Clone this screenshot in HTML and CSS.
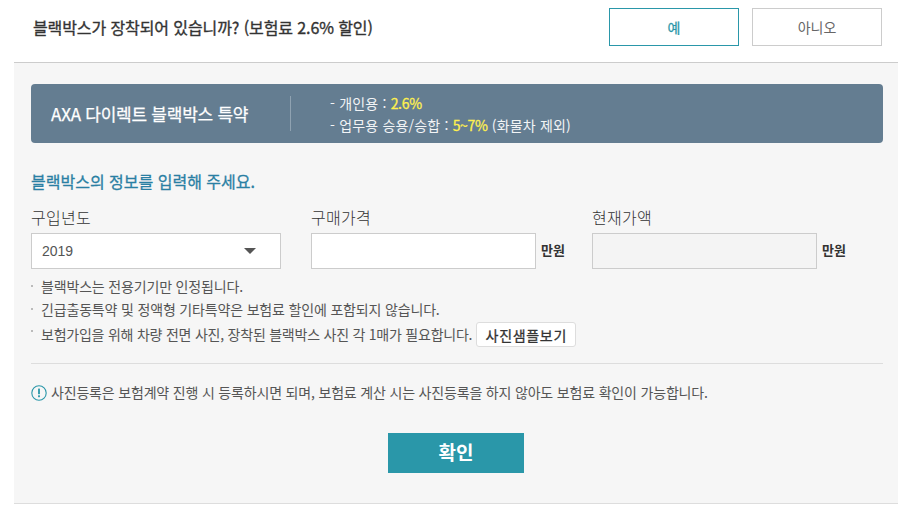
FILE: index.html
```html
<!DOCTYPE html>
<html lang="ko">
<head>
<meta charset="utf-8">
<title>블랙박스 특약</title>
<link rel="stylesheet" href="styles.css">
</head>
<body>
<div class="wrap">
  <header class="head">
    <h1 class="q">블랙박스가 장착되어 있습니까? (보험료 2.6% 할인)</h1>
    <div class="choices">
      <button class="choice on">예</button>
      <button class="choice">아니오</button>
    </div>
  </header>
  <main class="panel">
    <section class="banner">
      <div class="b-title">AXA 다이렉트 블랙박스 특약</div>
      <div class="b-list">
        <p>- 개인용 : <em>2.6%</em></p>
        <p>- 업무용 승용/승합 : <em>5~7%</em> (화물차 제외)</p>
      </div>
    </section>
    <h2 class="sub">블랙박스의 정보를 입력해 주세요.</h2>
    <div class="fields">
      <div class="field f1">
        <label class="lab">구입년도</label>
        <div class="box select">2019<span class="arrow"></span></div>
      </div>
      <div class="field f2">
        <label class="lab">구매가격</label>
        <div class="row"><div class="box price"></div><span class="unit">만원</span></div>
      </div>
      <div class="field f3">
        <label class="lab">현재가액</label>
        <div class="row"><div class="box price off"></div><span class="unit">만원</span></div>
      </div>
    </div>
    <ul class="notes">
      <li>블랙박스는 전용기기만 인정됩니다.</li>
      <li>긴급출동특약 및 정액형 기타특약은 보험료 할인에 포함되지 않습니다.</li>
      <li class="with-btn">보험가입을 위해 차량 전면 사진, 장착된 블랙박스 사진 각 1매가 필요합니다.<button class="sample">사진샘플보기</button></li>
    </ul>
    <p class="info">
      <svg class="ico" width="16" height="16" viewBox="0 0 16 16"><circle cx="8" cy="8" r="7.2" fill="none" stroke="#2a97a9" stroke-width="1.1"/><rect x="7.1" y="3.6" width="1.8" height="5.6" fill="#2a97a9"/><rect x="7.1" y="10.3" width="1.8" height="1.9" fill="#2a97a9"/></svg>
      <span>사진등록은 보험계약 진행 시 등록하시면 되며, 보험료 계산 시는 사진등록을 하지 않아도 보험료 확인이 가능합니다.</span>
    </p>
    <div class="actions"><button class="ok">확인</button></div>
  </main>
</div>
</body>
</html>
```
FILE: styles.css
```css
* { box-sizing: border-box; }
html, body { margin: 0; padding: 0; background: #fff; }
body { font-family: "Noto Sans CJK KR", "Noto Sans", sans-serif; color: #333; width: 908px; height: 514px; overflow: hidden; }
button { font-family: inherit; cursor: pointer; }
.wrap { margin-left: 14px; width: 884px; }
.head { height: 63px; border-bottom: 1px solid #ccc; display: flex; align-items: flex-start; justify-content: space-between; padding: 8px 16px 0 19px; }
.q { margin: 8px 0 0; font-size: 16px; line-height: 22px; font-weight: 400; -webkit-text-stroke: 0.35px #333; color: #333; letter-spacing: -0.1px; }
.choices { display: flex; gap: 13px; }
.choice { width: 130px; height: 38px; border: 1px solid #ccc; background: #fff; color: #666; font-size: 14px; padding: 0; }
.choice.on { border-color: #2a97a9; color: #2a97a9; -webkit-text-stroke: 0.25px #2a97a9; }
.panel { height: 441px; background: #f6f6f6; border-bottom: 1px solid #ddd; padding: 21px 15px 0 17px; }
.banner { height: 59px; border-radius: 4px; background: #647d91; display: flex; align-items: center; color: #fff; }
.b-title { width: 260px; height: 35px; line-height: 35px; padding-left: 20px; border-right: 1px solid #8fa2b1; font-size: 17px; -webkit-text-stroke: 0.25px #fff; letter-spacing: -0.25px; }
.b-list { padding-left: 39px; font-size: 14px; line-height: 22px; letter-spacing: 0.18px; color: #f2f4f6; }
.b-list p { margin: 0; }
.b-list em { font-style: normal; font-weight: 400; -webkit-text-stroke: 0.3px #fff04e; color: #fff04e; letter-spacing: -0.3px; }
.sub { margin: 27px 0 0; font-size: 16px; line-height: 22px; font-weight: 400; -webkit-text-stroke: 0.3px #2a7fa3; color: #2a7fa3; }
.fields { display: flex; margin-top: 14px; }
.field { display: flex; flex-direction: column; }
.f1 { width: 280px; }
.f2 { width: 281px; }
.lab { font-size: 16px; line-height: 22px; font-weight: 300; color: #333; letter-spacing: 0.3px; margin-bottom: 5px; }
.row { display: flex; align-items: center; }
.box { height: 36px; border: 1px solid #ccc; background: #fff; }
.select { width: 250px; display: flex; align-items: center; justify-content: space-between; padding: 0 24px 1px 10px; font-family: "Liberation Sans", sans-serif; font-size: 14px; color: #555; }
.arrow { width: 0; height: 0; border-style: solid; border-width: 6px 6px 0; border-color: #555 transparent transparent; }
.price { width: 225px; }
.price.off { background: #f4f4f4; }
.unit { margin-left: 5px; padding-bottom: 4px; font-size: 13px; font-weight: 700; color: #333; }
.notes { list-style: none; margin: 6px 0 0; padding: 0; font-size: 14px; line-height: 23px; color: #555; letter-spacing: -0.17px; }
.notes li { position: relative; padding-left: 10px; }
.notes li::before { content: ""; position: absolute; left: 0; top: 10px; width: 2px; height: 2px; background: #bbb; }
.notes .with-btn { display: flex; align-items: center; margin-top: 1px; letter-spacing: -0.23px; }
.notes .with-btn::before { top: 8px; }
.sample { margin-left: 4px; height: 25px; width: 100px; padding: 0; border: 1px solid #ddd; border-radius: 3px; background: #fff; color: #333; font-size: 14px; -webkit-text-stroke: 0.3px #333; letter-spacing: 0.7px; }
.info { margin: 16px 0 0; border-top: 1px solid #ddd; padding-top: 18px; display: flex; align-items: center; gap: 4px; font-size: 14px; line-height: 20px; color: #555; letter-spacing: -0.18px; }
.ico { flex: none; margin-top: 1px; }
.actions { display: flex; justify-content: center; margin-top: 31px; padding-right: 2px; }
.ok { width: 136px; height: 40px; border: 0; background: #2a97a9; color: #fff; font-size: 19px; font-weight: 700; padding: 0 0 3px; }
```
